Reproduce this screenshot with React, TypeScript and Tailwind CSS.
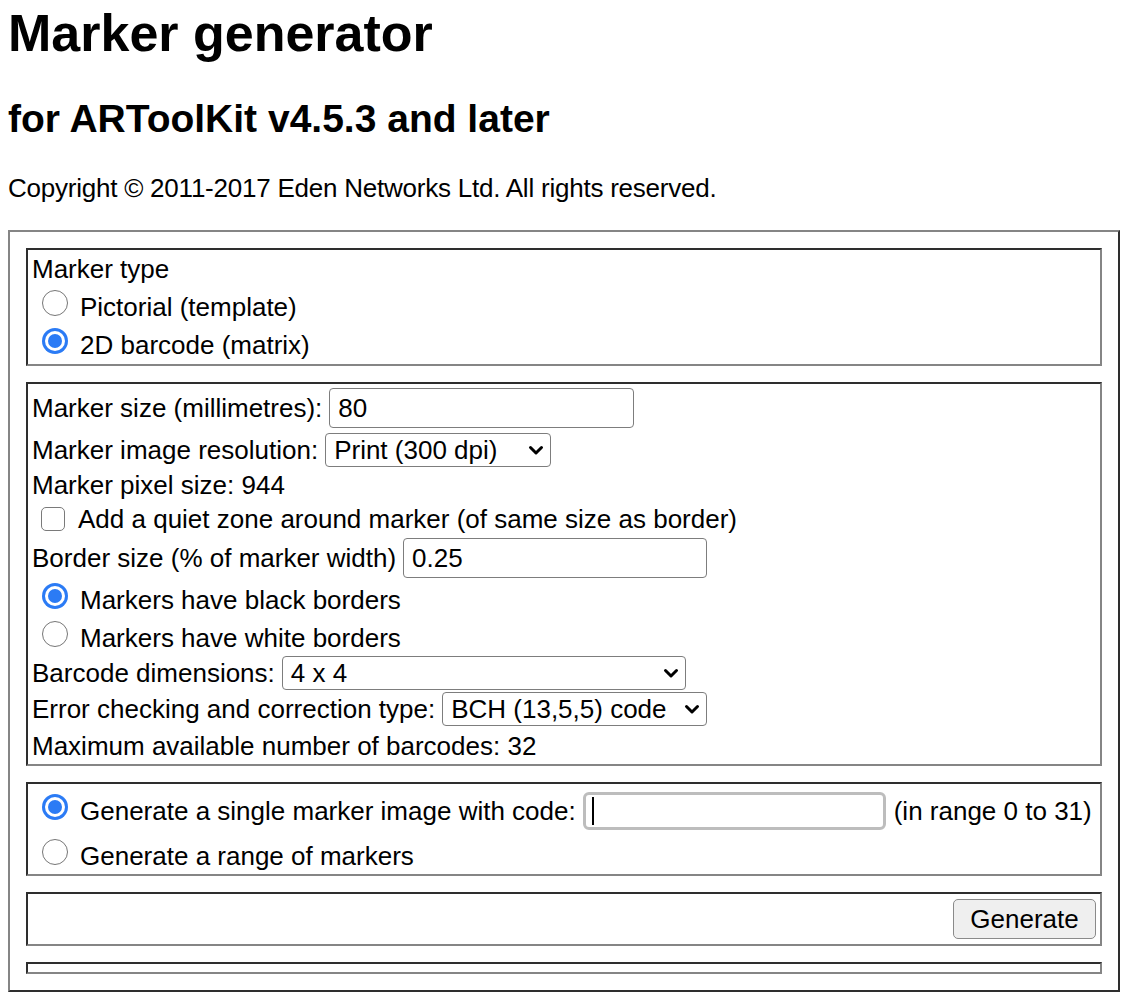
import React from "react";

function Radio({ checked, h }: { checked?: boolean; h: number }) {
  const top = (h - 30) / 2 - 2;
  return (
    <div className="self-start ml-[10px] shrink-0" style={{ marginTop: top }}>
      {checked ? (
        <div className="w-[26px] h-[26px] rounded-full bg-[#2b7bf5] flex items-center justify-center">
          <div className="w-[20px] h-[20px] rounded-full bg-white flex items-center justify-center">
            <div className="w-[14px] h-[14px] rounded-full bg-[#2b7bf5]" />
          </div>
        </div>
      ) : (
        <div className="w-[26px] h-[26px] rounded-full bg-white border-[1.5px] border-[#767676]" />
      )}
    </div>
  );
}

function Chevron() {
  return (
    <svg width="16" height="11" viewBox="0 0 16 11" className="shrink-0">
      <path d="M2.5 2.5 L8 8 L13.5 2.5" fill="none" stroke="#000" strokeWidth="3" strokeLinecap="round" strokeLinejoin="round" />
    </svg>
  );
}

function Select({ value, width }: { value: string; width: number }) {
  return (
    <div
      className="ml-[7px] h-[34px] border-[1.5px] border-[#7d7d7d] rounded-[4px] bg-white flex items-center justify-between pl-[8px] pr-[6px] shrink-0"
      style={{ width }}
    >
      <span className="leading-[30px] whitespace-nowrap">{value}</span>
      <Chevron />
    </div>
  );
}

function TextInput({ value, width }: { value: string; width: number }) {
  return (
    <div
      className="ml-[7px] h-[40px] border-[1.5px] border-[#7d7d7d] rounded-[4px] bg-white flex items-center pl-[8px] shrink-0"
      style={{ width }}
    >
      <span className="leading-[30px]">{value}</span>
    </div>
  );
}

function Box({ children }: { children: React.ReactNode }) {
  return (
    <div className="border-2 border-t-[#2e2e2e] border-l-[#2e2e2e] border-r-[#858585] border-b-[#858585] pl-[4px] pr-[2px]">
      {children}
    </div>
  );
}

export default function App() {
  return (
    <div className="min-h-[1002px] bg-white text-black font-['Liberation_Sans',Arial,Helvetica,sans-serif] text-[26px] px-[8px] pt-[4px]">
      <h1 className="text-[52px] font-bold leading-[58px] m-0">Marker generator</h1>
      <h2 className="text-[39px] font-bold leading-[44px] mt-[35px] mb-0">for ARToolKit v4.5.3 and later</h2>
      <p className="leading-[30px] mt-[32px] mb-0 tracking-[-0.23px]">Copyright © 2011-2017 Eden Networks Ltd. All rights reserved.</p>

      <div className="mt-[27px] w-[1112px] border-2 border-t-[#858585] border-l-[#858585] border-r-[#2e2e2e] border-b-[#2e2e2e] p-[16px] flex flex-col gap-[16px]">
        <Box>
          <div className="h-[38px] flex items-center leading-[30px]">Marker type</div>
          <div className="h-[38px] flex items-center leading-[30px]">
            <Radio h={38} />
            <span className="ml-[12px]">Pictorial (template)</span>
          </div>
          <div className="h-[38px] flex items-center leading-[30px]">
            <Radio h={38} checked />
            <span className="ml-[12px]">2D barcode (matrix)</span>
          </div>
        </Box>

        <Box>
          <div className="h-[48px] flex items-center leading-[30px]">
            <span>Marker size (millimetres):</span>
            <TextInput value="80" width={305} />
          </div>
          <div className="h-[36px] flex items-center leading-[30px]">
            <span>Marker image resolution:</span>
            <Select value="Print (300 dpi)" width={226} />
          </div>
          <div className="h-[34px] flex items-center leading-[30px]">Marker pixel size: 944</div>
          <div className="h-[34px] flex items-center leading-[30px]">
            <div className="ml-[9px] w-[24px] h-[24px] border-[1.5px] border-[#7a7a7a] rounded-[5px] bg-white shrink-0" />
            <span className="ml-[13px]">Add a quiet zone around marker (of same size as border)</span>
          </div>
          <div className="h-[44px] flex items-center leading-[30px]">
            <span>Border size (% of marker width)</span>
            <TextInput value="0.25" width={304} />
          </div>
          <div className="h-[40px] flex items-center leading-[30px]">
            <Radio h={40} checked />
            <span className="ml-[12px]">Markers have black borders</span>
          </div>
          <div className="h-[36px] flex items-center leading-[30px]">
            <Radio h={36} />
            <span className="ml-[12px]">Markers have white borders</span>
          </div>
          <div className="h-[34px] flex items-center leading-[30px]">
            <span>Barcode dimensions:</span>
            <Select value="4 x 4" width={404} />
          </div>
          <div className="h-[38px] flex items-center leading-[30px]">
            <span>Error checking and correction type:</span>
            <Select value="BCH (13,5,5) code" width={265} />
          </div>
          <div className="h-[36px] flex items-center leading-[30px]">Maximum available number of barcodes: 32</div>
        </Box>

        <Box>
          <div className="h-[54px] flex items-center leading-[30px]">
            <Radio h={54} checked />
            <span className="ml-[12px]">Generate a single marker image with code:</span>
            <div className="ml-[7px] w-[303px] h-[38px] border-[3px] border-[#bdbdbd] rounded-[6px] bg-white flex items-center pl-[6px] shrink-0">
              <div className="w-[2px] h-[28px] bg-black" />
            </div>
            <span className="ml-[8px] whitespace-nowrap">(in range 0 to 31)</span>
          </div>
          <div className="h-[36px] flex items-center leading-[30px]">
            <Radio h={36} />
            <span className="ml-[12px]">Generate a range of markers</span>
          </div>
        </Box>

        <Box>
          <div className="h-[50px] flex items-center justify-end pr-[2px]">
            <button className="w-[143px] h-[40px] bg-[#efefef] border-[1.5px] border-[#8a8a8a] rounded-[5px] text-[26px] leading-[30px] text-black font-['Liberation_Sans',Arial,sans-serif]">
              Generate
            </button>
          </div>
        </Box>

        <Box>
          <div className="h-[8px]" />
        </Box>
      </div>
    </div>
  );
}
